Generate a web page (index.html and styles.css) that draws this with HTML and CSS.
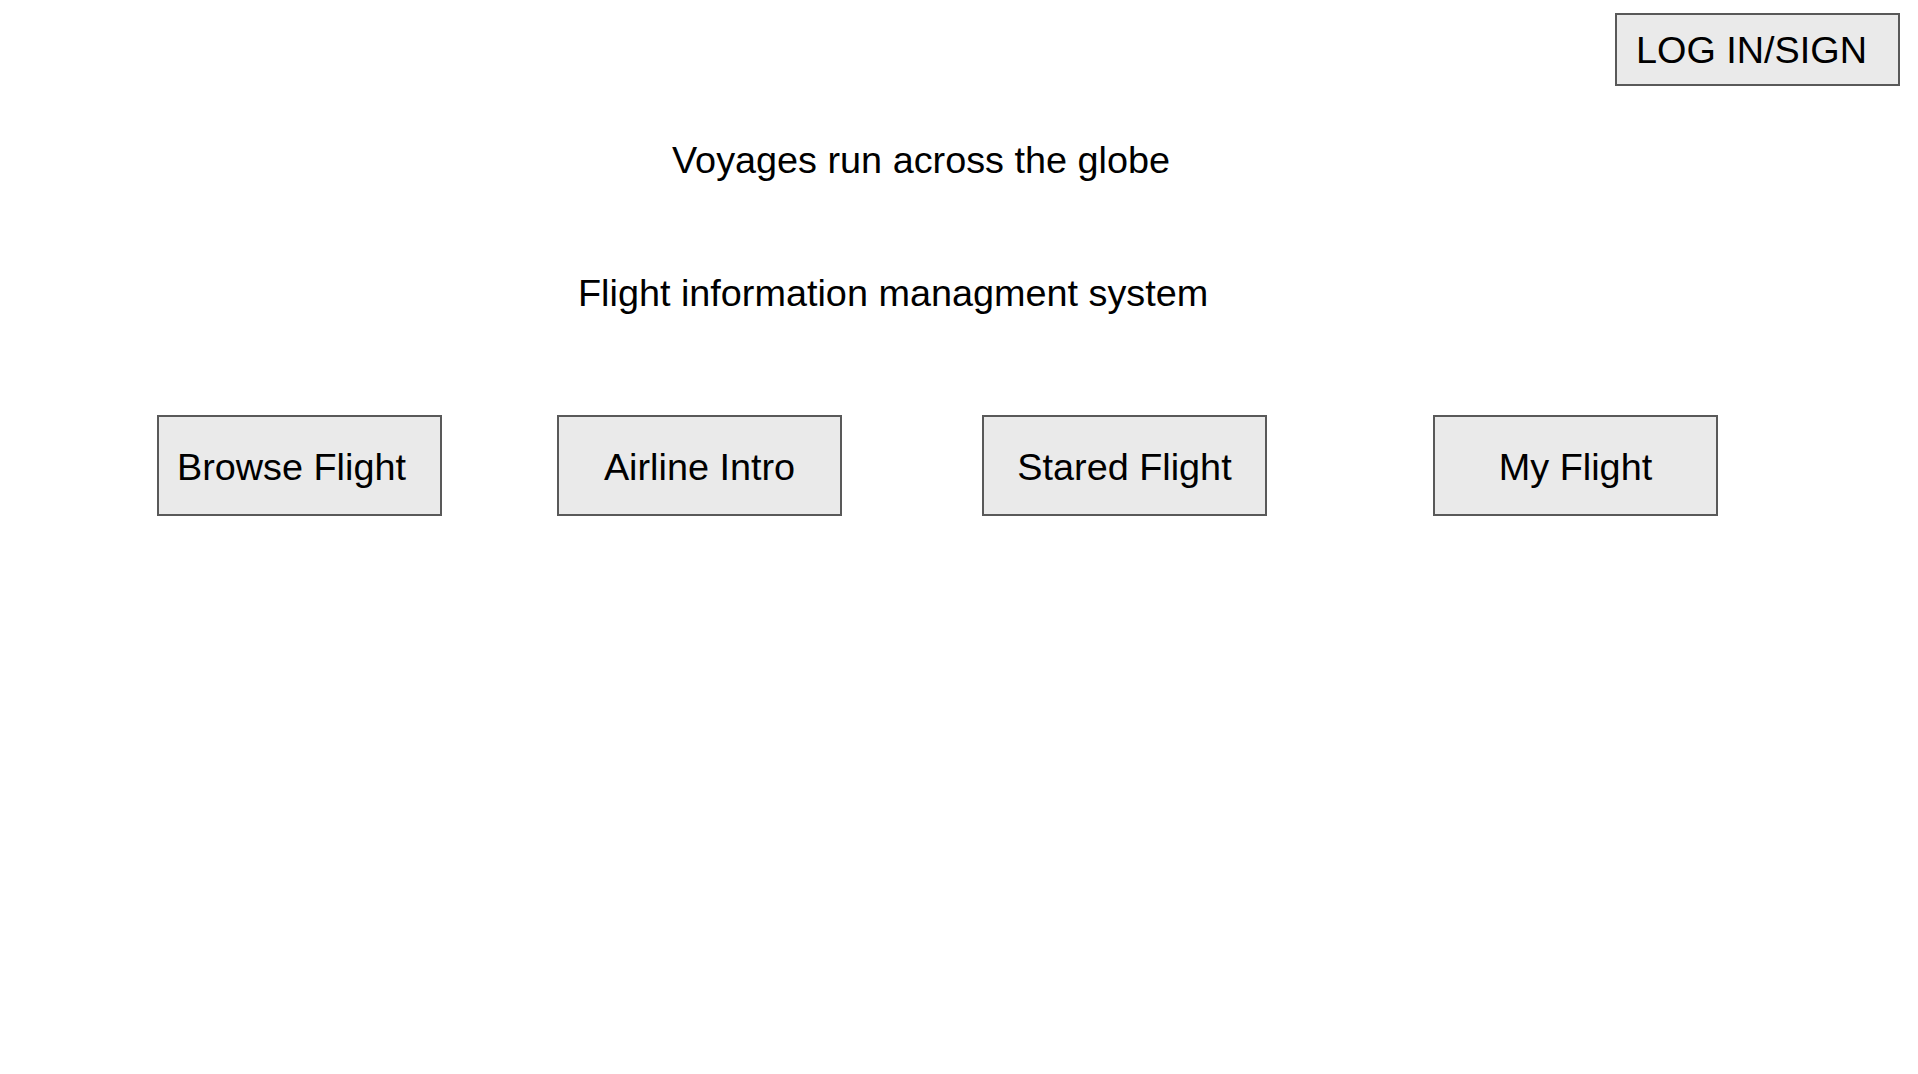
FILE: index.html
```html
<!DOCTYPE html>
<html lang="en">
<head>
<meta charset="utf-8">
<title>Voyages</title>
<link rel="stylesheet" href="styles.css">
</head>
<body>
<header class="topbar">
  <div class="box login">LOG IN/SIGN</div>
</header>
<main>
  <h1 class="title title-main">Voyages run across the globe</h1>
  <h2 class="title title-sub">Flight information managment system</h2>
  <nav class="menu">
    <div class="box btn btn-browse">Browse Flight</div>
    <div class="box btn btn-airline">Airline Intro</div>
    <div class="box btn btn-stared">Stared Flight</div>
    <div class="box btn btn-my">My Flight</div>
  </nav>
</main>
</body>
</html>
```
FILE: styles.css
```css
html, body {
  margin: 0;
  padding: 0;
  background: #ffffff;
}
body {
  width: 1918px;
  height: 1074px;
  font-family: "Liberation Sans", Arial, sans-serif;
  font-size: 37.8px;
  color: #000000;
  overflow: hidden;
}
.topbar {
  display: flex;
  justify-content: flex-end;
  padding: 13px 18px 0 0;
}
.box {
  box-sizing: border-box;
  width: 285px;
  background: #eaeaea;
  border: 2px solid #595959;
  display: flex;
  align-items: center;
  line-height: 42px;
  white-space: nowrap;
}
.login {
  height: 73px;
  padding-left: 19px;
  padding-top: 1px;
}
.title {
  margin: 0;
  font-weight: normal;
  font-size: 37.8px;
  line-height: 42px;
}
.title-main {
  margin-top: 53px;
  padding-left: 672px;
}
.title-sub {
  margin-top: 91px;
  padding-left: 578px;
}
.menu {
  display: flex;
  margin-top: 101px;
  padding-left: 157px;
}
.btn {
  height: 101px;
  justify-content: center;
  padding-top: 2px;
}
.btn-browse {
  justify-content: flex-start;
  padding-left: 18px;
}
.btn-airline { margin-left: 115px; }
.btn-stared { margin-left: 140px; }
.btn-my { margin-left: 166px; }
```
